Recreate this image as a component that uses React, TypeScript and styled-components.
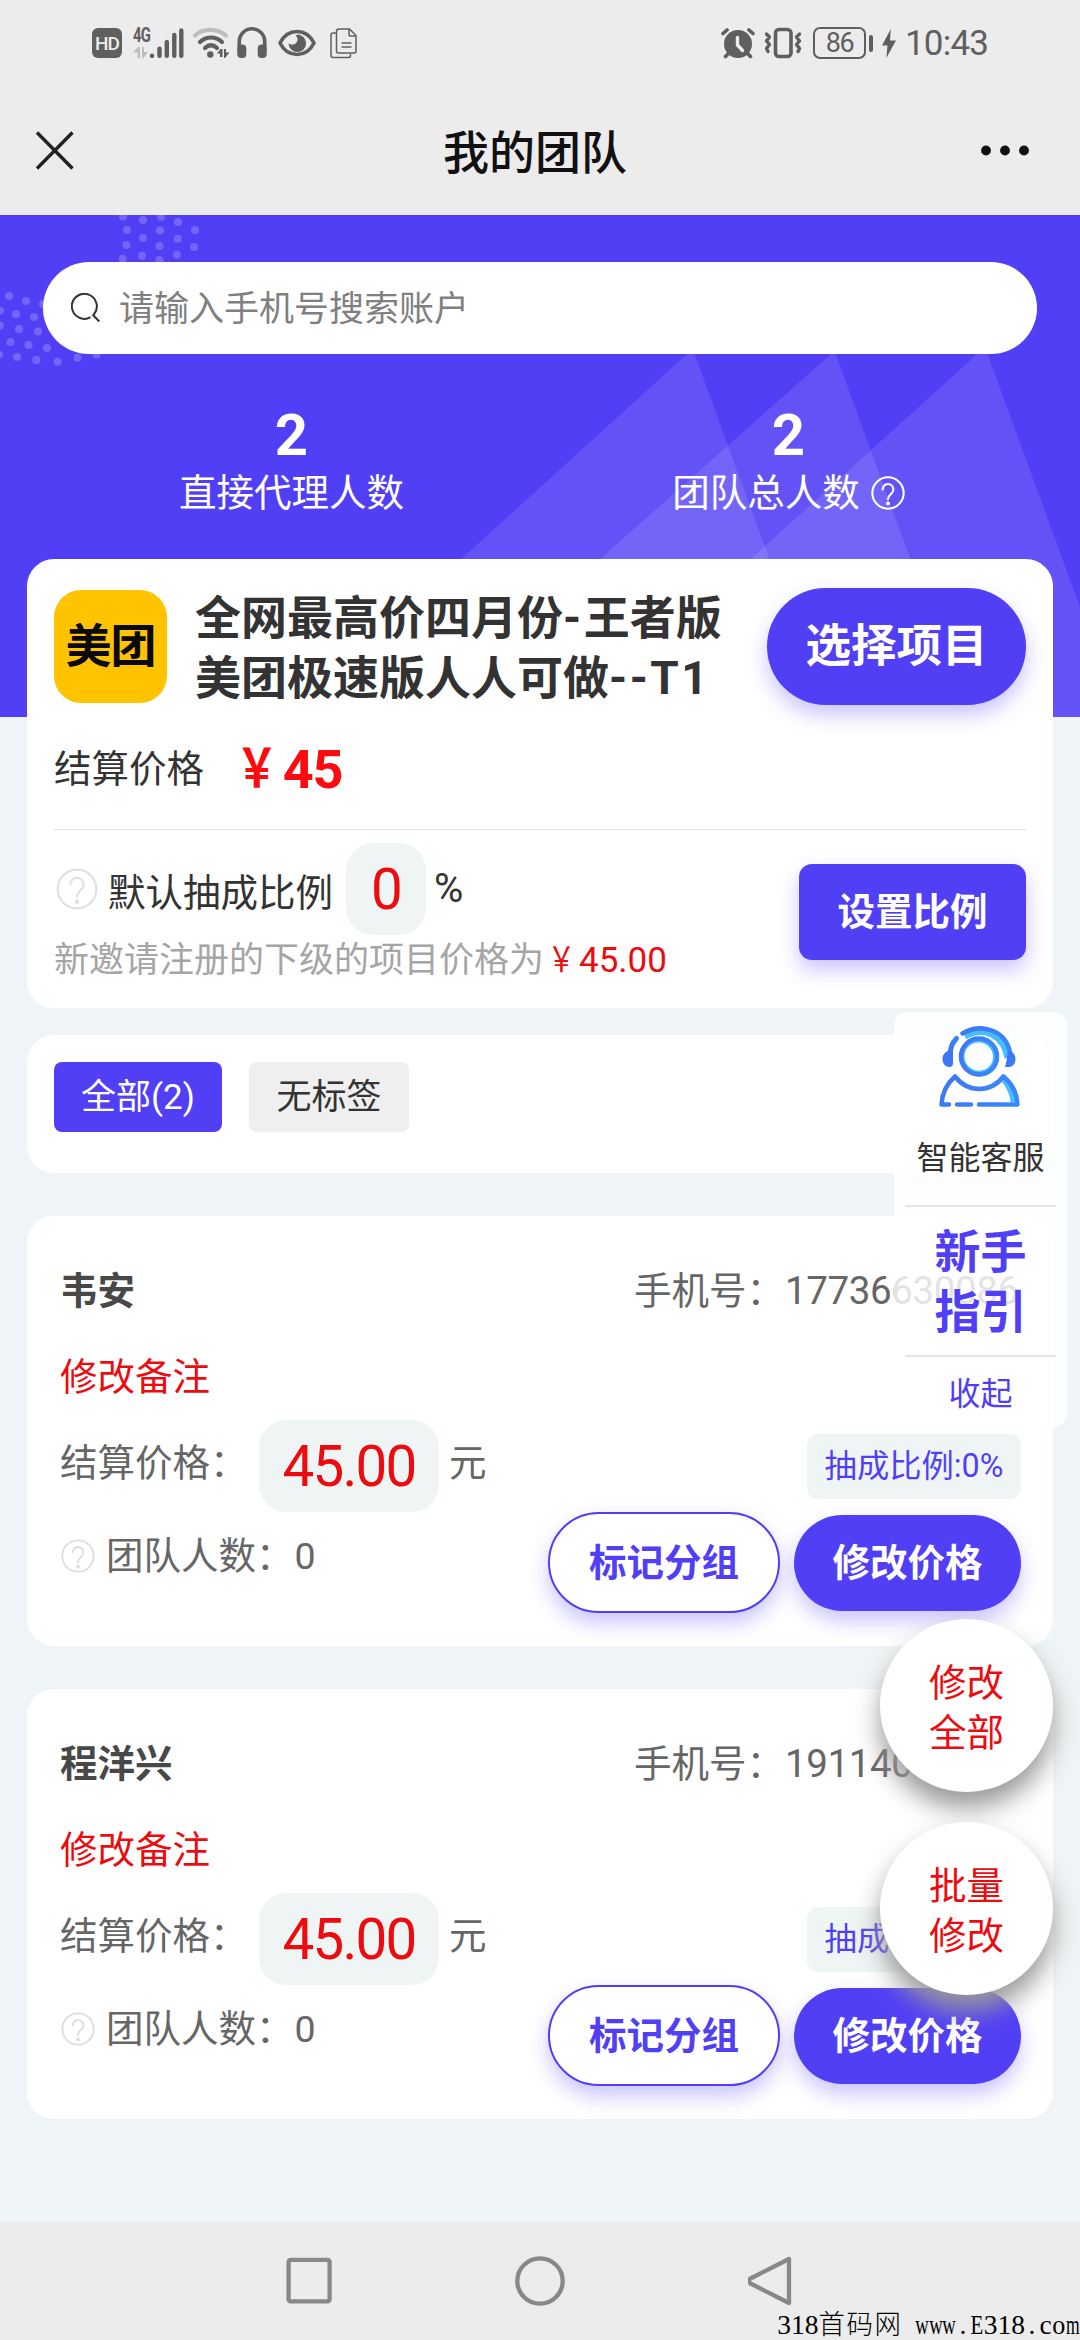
import React from "react";
import styled, { createGlobalStyle } from "styled-components";

const BLUE = "#513ff6";
const RED = "#ec0b0f";
const GREY = "#5f5f5f";
const SHADOW = "0 10px 20px rgba(81, 63, 246, 0.3)";

const GlobalStyle = createGlobalStyle`
  * { box-sizing: border-box; }
  body {
    margin: 0;
    font-family: Roboto, "Noto Sans CJK SC", sans-serif;
    color: #333;
  }
  svg { display: block; flex: none; }
  button { font-family: inherit; border: none; padding: 0; margin: 0; }
`;

const Screen = styled.div`
  position: relative;
  width: 1080px;
  height: 2340px;
  display: flex;
  flex-direction: column;
  background: #eff5f6;
  overflow: hidden;
`;

/* ---------- status bar ---------- */
const StatusBar = styled.div`
  height: 86px;
  padding: 0 92px 0 92px;
  display: flex;
  justify-content: space-between;
  background: #ececec;
  color: ${GREY};
`;
const StatusGroup = styled.div`
  height: 86px;
  display: flex;
  align-items: center;
`;
const Gap = styled.div<{ $w: number }>`
  width: ${(p) => p.$w}px;
`;
const HdBadge = styled.div`
  width: 30px;
  height: 30px;
  border-radius: 6px;
  background: ${GREY};
  color: #ececec;
  font-size: 19px;
  font-weight: 500;
  line-height: 31px;
  text-align: center;
  letter-spacing: -1px;
`;
const SignalBox = styled.div`
  width: 51px;
  height: 32px;
  display: flex;
`;
const NetworkColumn = styled.div`
  width: 15px;
  display: flex;
  flex-direction: column;
  justify-content: space-between;
`;
const NetworkLabel = styled.span`
  font-size: 20px;
  font-weight: 700;
  line-height: 16px;
  letter-spacing: -1px;
  transform: scaleX(0.74);
  transform-origin: left;
`;
const Battery = styled.div`
  width: 53px;
  height: 32px;
  border: 2.5px solid ${GREY};
  border-radius: 7px;
  font-size: 27px;
  line-height: 28px;
  text-align: center;
  letter-spacing: -1.5px;
`;
const BatteryNub = styled.div`
  width: 4px;
  height: 17px;
  margin-left: 3px;
  border-radius: 2px;
  background: ${GREY};
`;
const Clock = styled.span`
  width: 83px;
  padding-top: 2px;
  font-size: 35px;
  line-height: 40px;
  letter-spacing: -0.8px;
  white-space: nowrap;
`;

/* ---------- title bar ---------- */
const TitleBar = styled.div`
  height: 129px;
  padding: 0 51px 0 35px;
  display: grid;
  grid-template-columns: 54px 1fr 48px;
  align-items: center;
  background: #ececec;
`;
const Title = styled.h1`
  margin: 4px 0 0;
  font-size: 46px;
  font-weight: 500;
  line-height: 60px;
  text-align: center;
  color: #111;
`;

/* ---------- body ---------- */
const Main = styled.main`
  position: relative;
  flex: 1;
  padding: 47px 27px 0;
`;
const Backdrop = styled.svg`
  position: absolute;
  left: 0;
  top: 0;
`;
const SearchBox = styled.div`
  position: relative;
  height: 92px;
  margin: 0 16px;
  padding-left: 28px;
  display: flex;
  align-items: center;
  border-radius: 46px;
  background: #fff;
`;
const SearchHint = styled.span`
  margin: 3px 0 0 19px;
  font-size: 35px;
  line-height: 50px;
  color: #808080;
`;
const Stats = styled.div`
  position: relative;
  margin: 0 16px;
  padding: 47px 0 43px;
  display: grid;
  grid-template-columns: 1fr 1fr;
  color: #fff;
`;
const Stat = styled.div`
  display: flex;
  flex-direction: column;
  align-items: center;
`;
const StatNumber = styled.strong`
  font-size: 58px;
  line-height: 69px;
`;
const StatLabel = styled.div`
  display: flex;
  align-items: center;
  gap: 11px;
  font-size: 37.5px;
  line-height: 46px;
`;

const Card = styled.section<{ $top?: number; $pad: string; $h: number }>`
  position: relative;
  height: ${(p) => p.$h}px;
  margin-top: ${(p) => p.$top ?? 0}px;
  padding: ${(p) => p.$pad};
  border-radius: 27px;
  background: #fff;
`;

const ProjectHead = styled.div`
  height: 117px;
  display: flex;
  align-items: center;
`;
const Logo = styled.div`
  width: 113px;
  height: 113px;
  flex: none;
  border-radius: 27px;
  background: #ffc300;
  color: #0a0a0a;
  font-size: 46px;
  font-weight: 700;
  line-height: 113px;
  text-align: center;
  letter-spacing: -1px;
`;
const ProjectName = styled.h2`
  flex: 1;
  margin: 2px 0 0 28px;
  font-size: 46px;
  line-height: 60px;
  font-weight: 700;
  white-space: nowrap;
`;
const Latin = styled.span`
  letter-spacing: 2.5px;
`;

const PillButton = styled.button<{ $w: number; $h: number; $size?: number; $radius?: number; $outline?: boolean }>`
  width: ${(p) => p.$w}px;
  height: ${(p) => p.$h}px;
  flex: none;
  border-radius: ${(p) => p.$radius ?? 60}px;
  border: ${(p) => (p.$outline ? `2px solid ${BLUE}` : "none")};
  background: ${(p) => (p.$outline ? "#fff" : BLUE)};
  color: ${(p) => (p.$outline ? BLUE : "#fff")};
  font-size: ${(p) => p.$size ?? 37.5}px;
  font-weight: 700;
  line-height: 60px;
  box-shadow: ${SHADOW};
`;

const PriceRow = styled.div`
  height: 125px;
  padding-top: 4px;
  display: flex;
  align-items: center;
  border-bottom: 1px solid #e2e4e4;
  font-size: 37.5px;
  line-height: 60px;
`;
const BigPrice = styled.strong`
  margin: 2px 0 0 26px;
  font-size: 54px;
  line-height: 60px;
  letter-spacing: -1.2px;
  color: #fb0b0f;
`;
const Yen = styled.span`
  display: inline-block;
  transform: scaleX(0.78);
`;
const RatioArea = styled.div`
  padding-top: 13px;
  display: flex;
  justify-content: space-between;
  align-items: flex-start;
`;
const RatioRow = styled.div`
  height: 92px;
  padding-left: 2px;
  display: flex;
  align-items: center;
  font-size: 37.5px;
  line-height: 50px;
`;
const RatioLabel = styled.span`
  margin: 7px 13px 0 10px;
`;
const ValueBox = styled.span<{ $w: number }>`
  width: ${(p) => p.$w}px;
  height: 92px;
  border-radius: 27px;
  background: #eff5f5;
  color: ${RED};
  font-size: 56.5px;
  line-height: 94px;
  letter-spacing: -1.8px;
  text-align: center;
`;
const Percent = styled.span`
  margin-left: 8px;
  font-size: 40px;
`;
const Hint = styled.p`
  margin: 0;
  padding-top: 2px;
  font-size: 35px;
  line-height: 48px;
  color: #a5a5a5;
  em { font-style: normal; color: ${RED}; }
`;
const RatioButtonSlot = styled.div`
  padding-top: 21px;
`;

const TagRow = styled.div`
  display: flex;
  gap: 27px;
`;
const Tag = styled.span<{ $active?: boolean; $w: number }>`
  width: ${(p) => p.$w}px;
  height: 70px;
  border-radius: 8px;
  background: ${(p) => (p.$active ? BLUE : "#efefef")};
  color: ${(p) => (p.$active ? "#fff" : "#333")};
  font-size: 35px;
  line-height: 72px;
  text-align: center;
`;

/* ---------- member card ---------- */
const Line = styled.div<{ $h: number; $top?: number }>`
  height: ${(p) => p.$h}px;
  margin-top: ${(p) => p.$top ?? 0}px;
  display: flex;
  justify-content: space-between;
  align-items: center;
  font-size: 37.5px;
  line-height: 50px;
  color: #666;
`;
const Part = styled.div<{ $gap?: number; $up?: number }>`
  display: flex;
  align-items: center;
  gap: ${(p) => p.$gap ?? 0}px;
  margin-top: ${(p) => -(p.$up ?? 0)}px;
`;
const MemberName = styled.strong`
  color: #484848;
`;
const PhoneNumber = styled.span`
  width: 236px;
  font-size: 38.5px;
  letter-spacing: -0.4px;
`;
const PhoneLabel = styled.span`
  width: 151px;
`;
const Remark = styled.span`
  color: ${RED};
`;
const PriceLabel = styled.span`
  width: 199px;
  padding-bottom: 6px;
`;
const Yuan = styled.span`
  margin-left: 10px;
  padding-bottom: 6px;
`;
const RateChip = styled.span`
  width: 214px;
  height: 65px;
  border-radius: 11px;
  background: #eff5f5;
  color: ${BLUE};
  font-size: 32.3px;
  line-height: 65px;
  text-align: center;
`;
const TeamCount = styled.span`
  margin-left: 1px;
`;

/* ---------- floating items ---------- */
const SidePanel = styled.aside`
  position: absolute;
  left: 894px;
  top: 1012px;
  width: 173px;
  height: 415px;
  padding: 13px 11px 0;
  display: flex;
  flex-direction: column;
  align-items: center;
  border-radius: 13px;
  background: rgba(255, 255, 255, 0.82);
`;
const PanelText = styled.span`
  margin-top: 27px;
  height: 71px;
  font-size: 32px;
  line-height: 48px;
`;
const PanelRule = styled.div`
  align-self: stretch;
  height: 2px;
  background: #e3e5e5;
`;
const Guide = styled.strong`
  width: 92px;
  height: 148px;
  padding-top: 15px;
  font-size: 46px;
  line-height: 60px;
  text-align: center;
  color: ${BLUE};
`;
const Collapse = styled.span`
  margin-top: 13px;
  font-size: 32px;
  line-height: 48px;
  color: ${BLUE};
`;
const FloatButtons = styled.div`
  position: absolute;
  left: 880px;
  top: 1619px;
  display: flex;
  flex-direction: column;
  gap: 30px;
`;
const RoundButton = styled.button`
  width: 173px;
  height: 173px;
  padding: 4px 49px 0;
  border-radius: 50%;
  background: #fff;
  color: ${RED};
  font-size: 37.5px;
  line-height: 50px;
  white-space: nowrap;
  box-shadow: 0 16px 26px #999;
`;

/* ---------- system navigation ---------- */
const NavBar = styled.nav`
  height: 118px;
  padding: 34px 286px 0 286px;
  display: flex;
  justify-content: space-between;
  background: #ececec;
`;
const Watermark = styled.div`
  position: absolute;
  right: 0;
  bottom: 0;
  height: 29px;
  display: flex;
  font-family: "Liberation Serif", "Noto Sans CJK SC", serif;
  font-size: 27.5px;
  font-weight: 300;
  line-height: 28px;
  color: #000;
`;
const Glyph = styled.span<{ $w: number; $scale: number }>`
  width: ${(p) => p.$w}px;
  display: flex;
  justify-content: center;
  white-space: pre;
  transform: scaleX(${(p) => p.$scale});
`;

/* ---------- icons ---------- */
const HelpIcon = ({ size, color, width = 2 }: { size: number; color: string; width?: number }) => (
  <svg width={size} height={size} viewBox="0 0 36 36" fill="none" stroke={color} strokeWidth={width} strokeLinecap="round">
    <circle cx="18" cy="18" r="16.6" />
    <path d="M12.3 14.2a5.7 5.7 0 1 1 9.6 4.1c-2.4 2.2-3.9 2.9-3.9 6.2" />
    <circle cx="18" cy="29" r="1" fill={color} />
  </svg>
);

const SignalIcon = () => (
  <svg width="36" height="32" viewBox="0 0 36 32" stroke={GREY} strokeWidth="4.4" strokeLinecap="round">
    <path d="M4 28.8v.1M11.5 21.8v7M18.8 15v13.8M26.3 8v20.8M33.3 3.5v25.3" />
  </svg>
);

const Arrows = ({ color }: { color: string }) => (
  <svg width="15" height="12" viewBox="0 0 15 12" fill={color}>
    <path d="M5 0h2v11H4.500V5.500H0zM9 0h2v5h4l-5 6.500H9z" />
  </svg>
);

const WifiIcon = () => (
  <svg width="38" height="32" viewBox="0 0 38 32" fill="none" stroke={GREY} strokeWidth="4.200" strokeLinecap="round">
    <path d="M3 8.500C11 1 25 1 34 8.500" stroke="#bdbdbd" />
    <path d="M8 15c6.500-6 15.500-6 22 0M13 21c4-3.600 8-3.600 12 0" />
    <circle cx="18.300" cy="27.500" r="3.200" fill={GREY} stroke="none" />
    <path d="M28.500 22h2v8H28v-3.500h-3zM32 22h2v3.500h3.500L33 31h-1z" fill={GREY} stroke="none" />
  </svg>
);

const HeadphoneIcon = () => (
  <svg width="30" height="32" viewBox="0 0 30 32">
    <path d="M2.300 24V14.500a12.700 12.700 0 0 1 25.400 0V24" fill="none" stroke={GREY} strokeWidth="3.600" />
    <rect x="0.300" y="17.500" width="9" height="13.500" rx="4" fill={GREY} />
    <rect x="20.700" y="17.500" width="9" height="13.500" rx="4" fill={GREY} />
  </svg>
);

const EyeIcon = () => (
  <svg width="38" height="28" viewBox="0 0 38 28">
    <path d="M2 14C6 6 12 2.500 19 2.500S32 6 36 14c-4 8-10 11.500-17 11.500S6 22 2 14z" fill="none" stroke={GREY} strokeWidth="3.600" strokeLinejoin="round" />
    <path d="M20 5.500a8.800 8.800 0 1 1-9.500 9c2.500 1.800 6 1.500 7.800-.8 2-2.400 1.500-5.500-.8-7.200z" fill={GREY} />
  </svg>
);

const DocsIcon = () => (
  <svg width="27" height="31" viewBox="0 0 27 31" fill="none" stroke={GREY} strokeWidth="1.500" strokeLinejoin="round">
    <path d="M9 1h10.500l6.500 6.500V23a2 2 0 0 1-2 2H8.500a2 2 0 0 1-2-2V3.500A2.500 2.500 0 0 1 9 1z" />
    <path d="M19 1v5.500a1.500 1.500 0 0 0 1.500 1.500H26M11.500 15h10M11.500 19h10" />
    <path d="M6 5H3a2 2 0 0 0-2 2v20.500a2 2 0 0 0 2 2h15.500a2 2 0 0 0 2-2V26" />
  </svg>
);

const AlarmIcon = () => (
  <svg width="34" height="32" viewBox="0 0 34 32">
    <circle cx="17" cy="17" r="14" fill={GREY} />
    <g stroke={GREY} strokeWidth="3.600" strokeLinecap="round">
      <path d="M2 6.500L6 3M32 6.500L28 3M4.500 29.500L8 26M29.500 29.500L26 26" />
    </g>
    <path d="M16.500 10.500v7.500l5 5.500" fill="none" stroke="#ececec" strokeWidth="3.400" strokeLinecap="round" />
  </svg>
);

const VibrateIcon = () => (
  <svg width="38" height="32" viewBox="0 0 38 32" fill="none" stroke={GREY} strokeLinecap="round" strokeLinejoin="round">
    <rect x="11.500" y="2.500" width="15.500" height="27" rx="3.500" strokeWidth="3.600" />
    <path d="M2.500 7l3 3-3 4 3 3.500-3 4 1.500 3M35.500 7l-3 3 3 4-3 3.500 3 4-1.500 3" strokeWidth="3.400" />
  </svg>
);

const BoltIcon = () => (
  <svg width="14" height="29" viewBox="0 0 14 29" fill={GREY}>
    <path d="M8.800 0L0 16.500h5.500L4.300 29 14 11.500H8z" />
  </svg>
);

const CloseIcon = () => (
  <svg width="40" height="40" viewBox="0 0 40 40" stroke="#222" strokeWidth="3.400">
    <path d="M2 1.500L37.500 37.500M37.500 1.500L2 37.500" />
  </svg>
);

const MoreIcon = () => (
  <svg width="48" height="12" viewBox="0 0 48 12" fill="#111">
    <circle cx="5" cy="5.500" r="4.900" />
    <circle cx="24" cy="5.500" r="4.900" />
    <circle cx="43" cy="5.500" r="4.900" />
  </svg>
);

const SearchIcon = () => (
  <svg width="29" height="30" viewBox="0 0 29 30" fill="none" stroke="#333" strokeWidth="2">
    <path d="M19.500 24.200A12.500 12.500 0 1 1 22.800 21.500M21.500 21.500L28.300 28.500" />
  </svg>
);

const SupportIcon = () => (
  <svg width="83" height="82" viewBox="0 0 83 82" fill="none">
    <defs>
      <linearGradient id="tone" x1="0" y1="0" x2="1" y2="0.300">
        <stop offset="0" stopColor="#3f76f5" />
        <stop offset="1" stopColor="#3a86fb" />
      </linearGradient>
    </defs>
    <g stroke="#46bdff">
      <path d="M26 11.500C45 1 65 10 68.500 33" strokeWidth="6" />
      <circle cx="40.500" cy="32" r="16.500" strokeWidth="6" />
      <path d="M65 55C70 61 73.500 69 74.500 77" strokeWidth="5.500" />
    </g>
    <circle cx="39.500" cy="31.500" r="14" fill="#fff" />
    <g stroke="url(#tone)" strokeLinecap="round">
      <path d="M23.500 8.500C43-2.500 68 5 71.500 30" strokeWidth="4.500" />
      <path d="M17.500 13.500C13 18 11.500 22 11 31" strokeWidth="5" />
      <circle cx="40" cy="31.500" r="18" strokeWidth="4.500" />
      <path d="M2.500 79.500C3 69 7.500 59 16 51.500c13 16.500 35.500 16.500 48.500 0C73.500 59 78 69 78.500 79.500H40M32 79.500H18M10 79.500H2.500" strokeWidth="4.500" strokeLinejoin="round" />
    </g>
    <path d="M11 25c-5 1.500-7.500 5-7.500 9S6 42 10 42s4-2.500 4-5V25zM69 25c5 1.500 7.500 5 7.500 9S74 42 70 42h-4l1.500-6z" fill="#3b77f7" />
  </svg>
);

/* ---------- backdrop drawing ---------- */
const DOTS: [number, number][] = [
  [123, 1.5], [143, 5], [161, 2], [178, 7], [127, 15], [160, 15.5], [195, 15], [143, 23],
  [177.700, 23.700], [126.500, 30], [159.500, 31], [194, 32], [142, 40.700], [177, 39.700],
  [122.700, 43.700], [159.500, 45], [9, 81], [26, 86], [43, 89], [0, 95.700], [16, 99],
  [34, 102], [0, 110.500], [19, 114], [38, 116.500], [10.500, 127], [28.500, 130], [47, 133],
  [-1, 139.600], [17, 142], [36.500, 145], [57.500, 146.700], [77.500, 142.700], [96.500, 139.600],
];

const HeroArt = () => (
  <Backdrop width="1080" height="502" viewBox="0 0 1080 502">
    <rect width="1080" height="502" fill={BLUE} />
    <g fill="#fff" fillOpacity="0.2">
      {DOTS.map(([x, y], i) => (
        <circle key={i} cx={x} cy={y} r="4" />
      ))}
    </g>
    <g fill="#fff" fillOpacity="0.105">
      <path d="M692.700 134L287 502H827z" />
      <path d="M834.500 136L422 502H968z" />
      <path d="M985 132L576 502H1120z" />
    </g>
  </Backdrop>
);

/* ---------- content ---------- */
const MEMBERS = [
  { name: "韦安", phone: "17736630086", price: "45.00", rate: "0%", team: 0 },
  { name: "程洋兴", phone: "191140", price: "45.00", rate: "0%", team: 0 },
];

const MARK: { t: string; w: number; s: number }[] = [
  ..."318".split("").map((t) => ({ t, w: 13.77, s: 1 })),
  ..."首码网".split("").map((t) => ({ t, w: 27.54, s: 0.96 })),
  { t: " ", w: 13.77, s: 1 },
  ..."www".split("").map((t) => ({ t, w: 13.77, s: 0.68 })),
  { t: ".", w: 13.77, s: 1 },
  { t: "E", w: 13.77, s: 0.76 },
  ..."318".split("").map((t) => ({ t, w: 13.77, s: 1 })),
  { t: ".", w: 13.77, s: 1 },
  { t: "c", w: 13.77, s: 1 },
  { t: "o", w: 13.77, s: 0.95 },
  { t: "m", w: 13.77, s: 0.64 },
];

const MemberCard = ({ name, phone, price, rate, team }: (typeof MEMBERS)[number]) => (
  <Card $top={43} $h={430} $pad="50px 32px 0 33px">
    <Line $h={50}>
      <MemberName>{name}</MemberName>
      <Part>
        <PhoneLabel>手机号：</PhoneLabel>
        <PhoneNumber>{phone}</PhoneNumber>
      </Part>
    </Line>
    <Line $h={50} $top={36}>
      <Remark>修改备注</Remark>
    </Line>
    <Line $h={92} $top={18}>
      <Part>
        <PriceLabel>结算价格：</PriceLabel>
        <ValueBox $w={180}>{price}</ValueBox>
        <Yuan>元</Yuan>
      </Part>
      <RateChip>抽成比例:{rate}</RateChip>
    </Line>
    <Line $h={101}>
      <Part $up={13}>
        <Gap $w={1} />
        <HelpIcon size={34} color="#dedede" />
        <Gap $w={11} />
        <span>团队人数：</span>
        <TeamCount>{team}</TeamCount>
      </Part>
      <Part $gap={14}>
        <PillButton $w={232} $h={101} $outline>标记分组</PillButton>
        <PillButton $w={227} $h={96}>修改价格</PillButton>
      </Part>
    </Line>
  </Card>
);

export default function App() {
  return (
    <Screen>
      <GlobalStyle />
      <StatusBar>
        <StatusGroup>
          <HdBadge>HD</HdBadge>
          <Gap $w={11} />
          <SignalBox>
            <NetworkColumn>
              <NetworkLabel>4G</NetworkLabel>
              <Arrows color="#bdbdbd" />
            </NetworkColumn>
            <SignalIcon />
          </SignalBox>
          <Gap $w={8} />
          <WifiIcon />
          <Gap $w={7} />
          <HeadphoneIcon />
          <Gap $w={11} />
          <EyeIcon />
          <Gap $w={14} />
          <DocsIcon />
        </StatusGroup>
        <StatusGroup>
          <AlarmIcon />
          <Gap $w={9} />
          <VibrateIcon />
          <Gap $w={11} />
          <Battery>86</Battery>
          <BatteryNub />
          <Gap $w={9} />
          <BoltIcon />
          <Gap $w={9} />
          <Clock>10:43</Clock>
        </StatusGroup>
      </StatusBar>
      <TitleBar>
        <CloseIcon />
        <Title>我的团队</Title>
        <MoreIcon />
      </TitleBar>

      <Main>
        <HeroArt />
        <SearchBox>
          <SearchIcon />
          <SearchHint>请输入手机号搜索账户</SearchHint>
        </SearchBox>
        <Stats>
          <Stat>
            <StatNumber>2</StatNumber>
            <StatLabel>直接代理人数</StatLabel>
          </Stat>
          <Stat>
            <StatNumber>2</StatNumber>
            <StatLabel>
              团队总人数
              <HelpIcon size={34} color="#fff" width={2.200} />
            </StatLabel>
          </Stat>
        </Stats>

        <Card $h={449} $pad="29px 27px 0">
          <ProjectHead>
            <Logo>美团</Logo>
            <ProjectName>
              全网最高价四月份<Latin>-</Latin>王者版
              <br />
              美团极速版人人可做<Latin>--T1</Latin>
            </ProjectName>
            <PillButton $w={259} $h={117} $size={45.5}>选择项目</PillButton>
          </ProjectHead>
          <PriceRow>
            <span>结算价格</span>
            <BigPrice><Yen>￥</Yen>45</BigPrice>
          </PriceRow>
          <RatioArea>
            <div>
              <RatioRow>
                <HelpIcon size={42} color="#e0e0e0" width={1.800} />
                <RatioLabel>默认抽成比例</RatioLabel>
                <ValueBox $w={80}>0</ValueBox>
                <Percent>%</Percent>
              </RatioRow>
              <Hint>
                新邀请注册的下级的项目价格为<em><Yen>￥</Yen>45.00</em>
              </Hint>
            </div>
            <RatioButtonSlot>
              <PillButton $w={227} $h={96} $radius={13}>设置比例</PillButton>
            </RatioButtonSlot>
          </RatioArea>
        </Card>

        <Card $top={27} $h={138} $pad="27px">
          <TagRow>
            <Tag $active $w={168}>全部(2)</Tag>
            <Tag $w={160}>无标签</Tag>
          </TagRow>
        </Card>

        {MEMBERS.map((m) => (
          <MemberCard key={m.name} {...m} />
        ))}
      </Main>

      <NavBar>
        <svg width="46" height="50" viewBox="0 0 46 50" fill="none" stroke="#888" strokeWidth="4.300">
          <rect x="2.600" y="3.900" width="41" height="41.500" rx="2" />
        </svg>
        <svg width="50" height="50" viewBox="0 0 50 50" fill="none" stroke="#888" strokeWidth="4.300">
          <circle cx="25" cy="25" r="22.700" />
        </svg>
        <svg width="46" height="50" viewBox="0 0 46 50" fill="none" stroke="#888" strokeWidth="4.300" strokeLinejoin="round">
          <path d="M41 3v44L2.500 27.500q-3-2.500 0-5z" />
        </svg>
      </NavBar>

      <SidePanel>
        <SupportIcon />
        <PanelText>智能客服</PanelText>
        <PanelRule />
        <Guide>
          新手
          <br />
          指引
        </Guide>
        <PanelRule />
        <Collapse>收起</Collapse>
      </SidePanel>

      <FloatButtons>
        <RoundButton>
          修改
          <br />
          全部
        </RoundButton>
        <RoundButton>
          批量
          <br />
          修改
        </RoundButton>
      </FloatButtons>

      <Watermark>
        {MARK.map((g, i) => (
          <Glyph key={i} $w={g.w} $scale={g.s}>{g.t}</Glyph>
        ))}
      </Watermark>
    </Screen>
  );
}
